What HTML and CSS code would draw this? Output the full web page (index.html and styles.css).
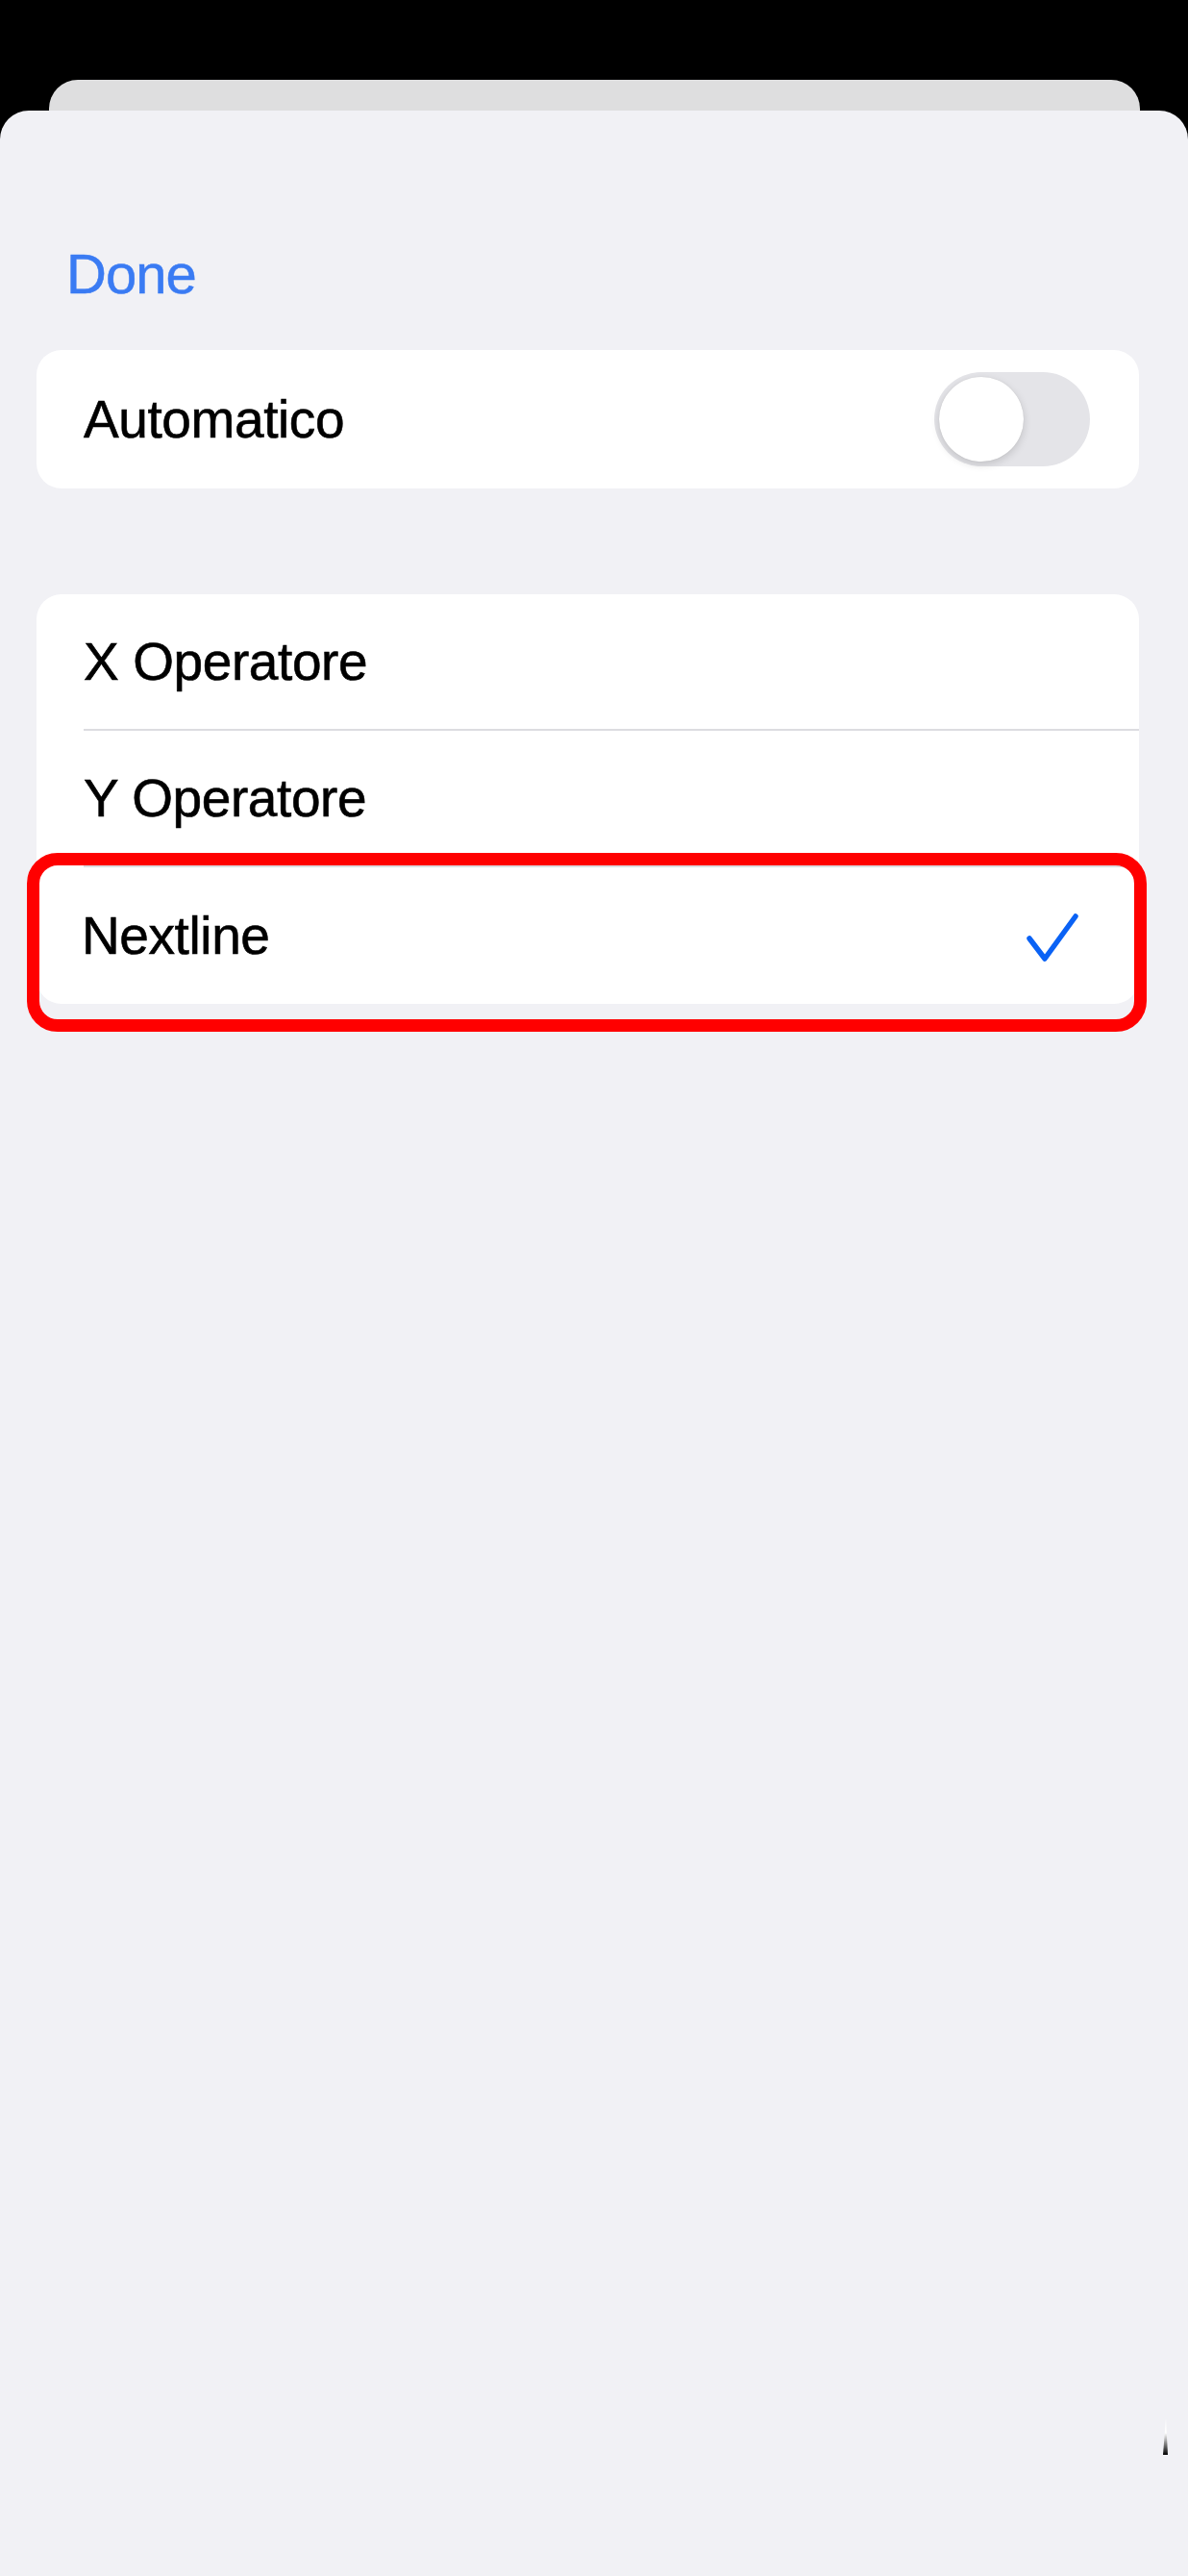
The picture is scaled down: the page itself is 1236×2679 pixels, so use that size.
FILE: index.html
```html
<!DOCTYPE html>
<html lang="it">
<head>
<meta charset="utf-8">
<title>Automatico</title>
<link rel="stylesheet" href="styles.css">
</head>
<body>
<div class="screen">
  <div class="back-card"></div>
  <div class="sheet">
    <div class="done">Done</div>
    <div class="group">
      <div class="row row-single">
        <span class="label">Automatico</span>
        <span class="toggle"><span class="knob"></span></span>
      </div>
    </div>
    <div class="group group-list">
      <div class="row"><div class="row-inner"><span class="label">X Operatore</span></div></div>
      <div class="row"><div class="row-inner"><span class="label">Y Operatore</span></div></div>
      <div class="row row-last"><div class="row-inner"><span class="label label-tight">Nextline</span>
        <svg class="check" width="54" height="50" viewBox="0 0 54 50"><polyline points="3,26 19,47 51,3" fill="none" stroke="#0a62f5" stroke-width="5.5" stroke-linecap="round" stroke-linejoin="round"/></svg>
      </div></div>
    </div>
    <div class="highlight"></div>
    <div class="sliver"></div>
  </div>
</div>
</body>
</html>
```
FILE: styles.css
```css
html, body {
  margin: 0;
  padding: 0;
  background: #000;
}
body {
  font-family: "Liberation Sans", Arial, sans-serif;
  color: #000;
}
.screen {
  width: 1236px;
  height: 2679px;
  padding-top: 83px;
  box-sizing: border-box;
  display: flex;
  flex-direction: column;
  overflow: hidden;
}
.back-card {
  height: 32px;
  margin-left: 51px;
  width: 1135px;
  background: #dededf;
  border-radius: 30px 30px 0 0;
  flex: none;
}
.sheet {
  position: relative;
  flex: 1;
  background: #f1f1f5;
  border-radius: 30px 30px 0 0;
  padding: 135px 51px 0 38px;
  display: flex;
  flex-direction: column;
}
.done {
  font-size: 58px;
  line-height: 70px;
  height: 70px;
  color: #3a7bf3;
  padding-left: 31px;
  letter-spacing: -1px;
  margin-bottom: 44px;
  -webkit-text-stroke: 0.5px #3a7bf3;
}
.group {
  background: #fff;
  border-radius: 26px;
  overflow: hidden;
}
.group-list {
  margin-top: 110px;
}
.row {
  height: 142px;
  display: flex;
  padding-left: 49px;
}
.row-single {
  height: 144px;
  align-items: center;
  justify-content: space-between;
  padding-right: 51px;
}
.row-inner {
  flex: 1;
  display: flex;
  align-items: center;
  justify-content: space-between;
  border-bottom: 2px solid #dcdce0;
  padding-right: 63px;
}
.row-last .row-inner {
  border-bottom: none;
}
.label {
  font-size: 55px;
  line-height: 66px;
  letter-spacing: -0.4px;
  -webkit-text-stroke: 0.6px #000;
}
.label-tight {
  margin-left: -2px;
}
.check {
  display: block;
  margin-top: 4px;
}
.toggle {
  width: 162px;
  height: 98px;
  border-radius: 49px;
  background: #e4e4e8;
  display: flex;
  align-items: center;
  padding-left: 5px;
  box-sizing: border-box;
}
.knob {
  width: 88px;
  height: 88px;
  border-radius: 50%;
  background: #fff;
  box-shadow: 0 3px 8px rgba(0,0,0,0.15), 0 0 1px rgba(0,0,0,0.12);
}
.highlight {
  position: absolute;
  left: 28px;
  top: 772px;
  width: 1165px;
  height: 186px;
  box-sizing: border-box;
  border: 13px solid #ff0000;
  border-radius: 32px;
}
.sliver {
  position: absolute;
  left: 1210px;
  top: 2400px;
  width: 5px;
  height: 38px;
  background: linear-gradient(to bottom, #fff 0%, #fff 40%, #000 100%);
  clip-path: polygon(60% 0, 100% 100%, 0 100%);
}
```
